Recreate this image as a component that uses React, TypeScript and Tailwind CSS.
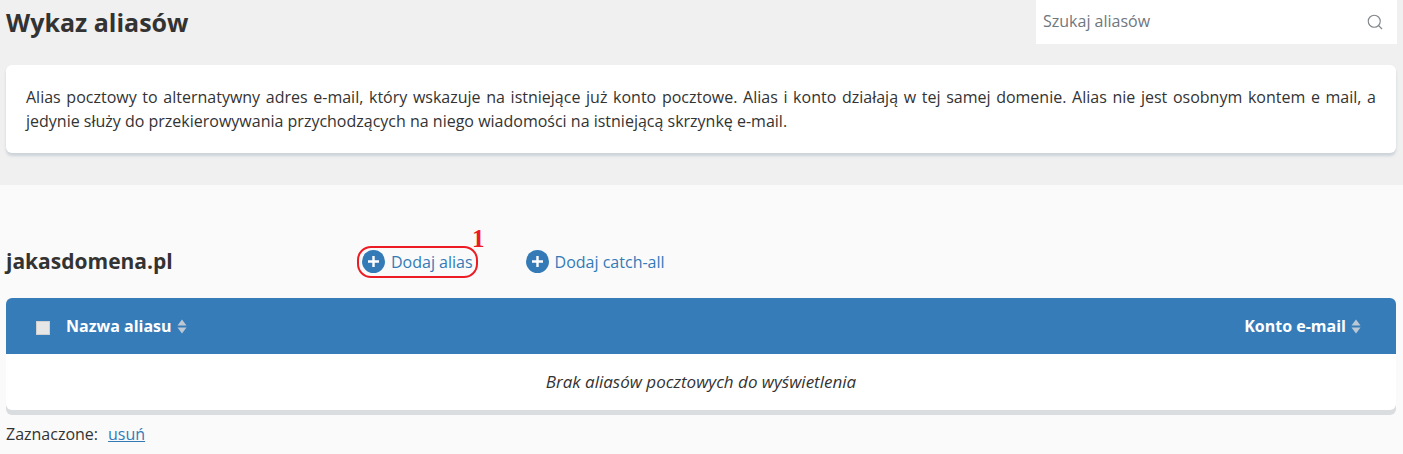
import { Search } from "lucide-react";

const SortArrows = () => (
  <svg width="10" height="15" viewBox="0 0 10 15" className="ml-[5px] shrink-0">
    <path d="M5 0.5 L9.5 6.5 H0.5 Z" fill="#bcc8d4" />
    <path d="M0.5 8.5 H9.5 L5 14.5 Z" fill="#bcc8d4" />
  </svg>
);

const AddLink = ({ label }: { label: string }) => (
  <a className="flex items-center text-[#337ab7] text-base leading-6 cursor-pointer">
    <svg width="23" height="23" viewBox="0 0 23 23" className="mr-[6px] shrink-0">
      <circle cx="11.5" cy="11.5" r="11.5" fill="#337ab7" />
      <path d="M11.5 6 V17 M6 11.5 H17" stroke="#fff" strokeWidth="2.4" />
    </svg>
    {label}
  </a>
);

export default function App() {
  return (
    <div className="w-[1403px] h-[454px] overflow-hidden bg-[#fafafa] text-[#333] font-['Open_Sans',sans-serif]">
      <section className="h-[185px] bg-[#f0f0f0] pl-[6px] pr-[7px]">
        <div className="flex justify-between h-[65px]">
          <h1 className="text-[25px] leading-[44px] font-bold">Wykaz aliasów</h1>
          <div className="flex items-center justify-between w-[361px] h-11 mr-[-1px] pl-[7px] pr-[13px] pb-[2px] bg-white">
            <span className="text-base text-[#6f7780]">Szukaj aliasów</span>
            <Search size={18} className="text-[#80868b] mt-[2px]" strokeWidth={1.5} />
          </div>
        </div>
        <div className="h-[88px] px-5 pt-[20px] bg-white rounded-md shadow-[0_3px_3px_0_#ccd3d9]">
          <p className="text-base leading-6 text-justify">
            Alias pocztowy to alternatywny adres e-mail, który wskazuje na istniejące już konto pocztowe. Alias i konto działają w tej samej domenie. Alias nie jest osobnym kontem e mail, a jedynie służy do przekierowywania przychodzących na niego wiadomości na istniejącą skrzynkę e-mail.
          </p>
        </div>
      </section>

      <section className="pl-[6px] pr-[7px]">
        <div className="flex items-center h-[113px] pt-[40px]">
          <h2 className="w-[356px] text-[21px] font-bold">jakasdomena.pl</h2>
          <div className="relative">
            <AddLink label="Dodaj alias" />
            <div className="absolute left-[-5px] top-[-4px] w-[121px] h-[32px] border-2 border-[#ed1c24] rounded-[14px]" />
            <span className="absolute left-[110px] top-[-23px] text-[25px] leading-6 font-bold text-[#ed1c24] font-['Liberation_Serif',serif]">1</span>
          </div>
          <div className="ml-[53px]">
            <AddLink label="Dodaj catch-all" />
          </div>
        </div>

        <div className="rounded-md bg-white shadow-[0_5px_0_0_#d9dde0]">
          <div className="flex items-center justify-between h-14 pl-[30px] pr-[35px] bg-[#367cb9] rounded-t-md text-white text-base font-bold">
            <div className="flex items-center">
              <span className="w-[14px] h-[14px] mt-[4px] mr-[16px] bg-[#e6e6e6] border border-[#d0d0d0]" />
              Nazwa aliasu
              <SortArrows />
            </div>
            <div className="flex items-center">
              Konto e-mail
              <SortArrows />
            </div>
          </div>
          <div className="h-[56px] flex items-center justify-center italic text-[17px]">
            Brak aliasów pocztowych do wyświetlenia
          </div>
        </div>

        <div className="mt-[12px] text-base leading-6">
          Zaznaczone:
          <a className="ml-[10px] text-[#337ab7] underline cursor-pointer">usuń</a>
        </div>
      </section>
    </div>
  );
}
